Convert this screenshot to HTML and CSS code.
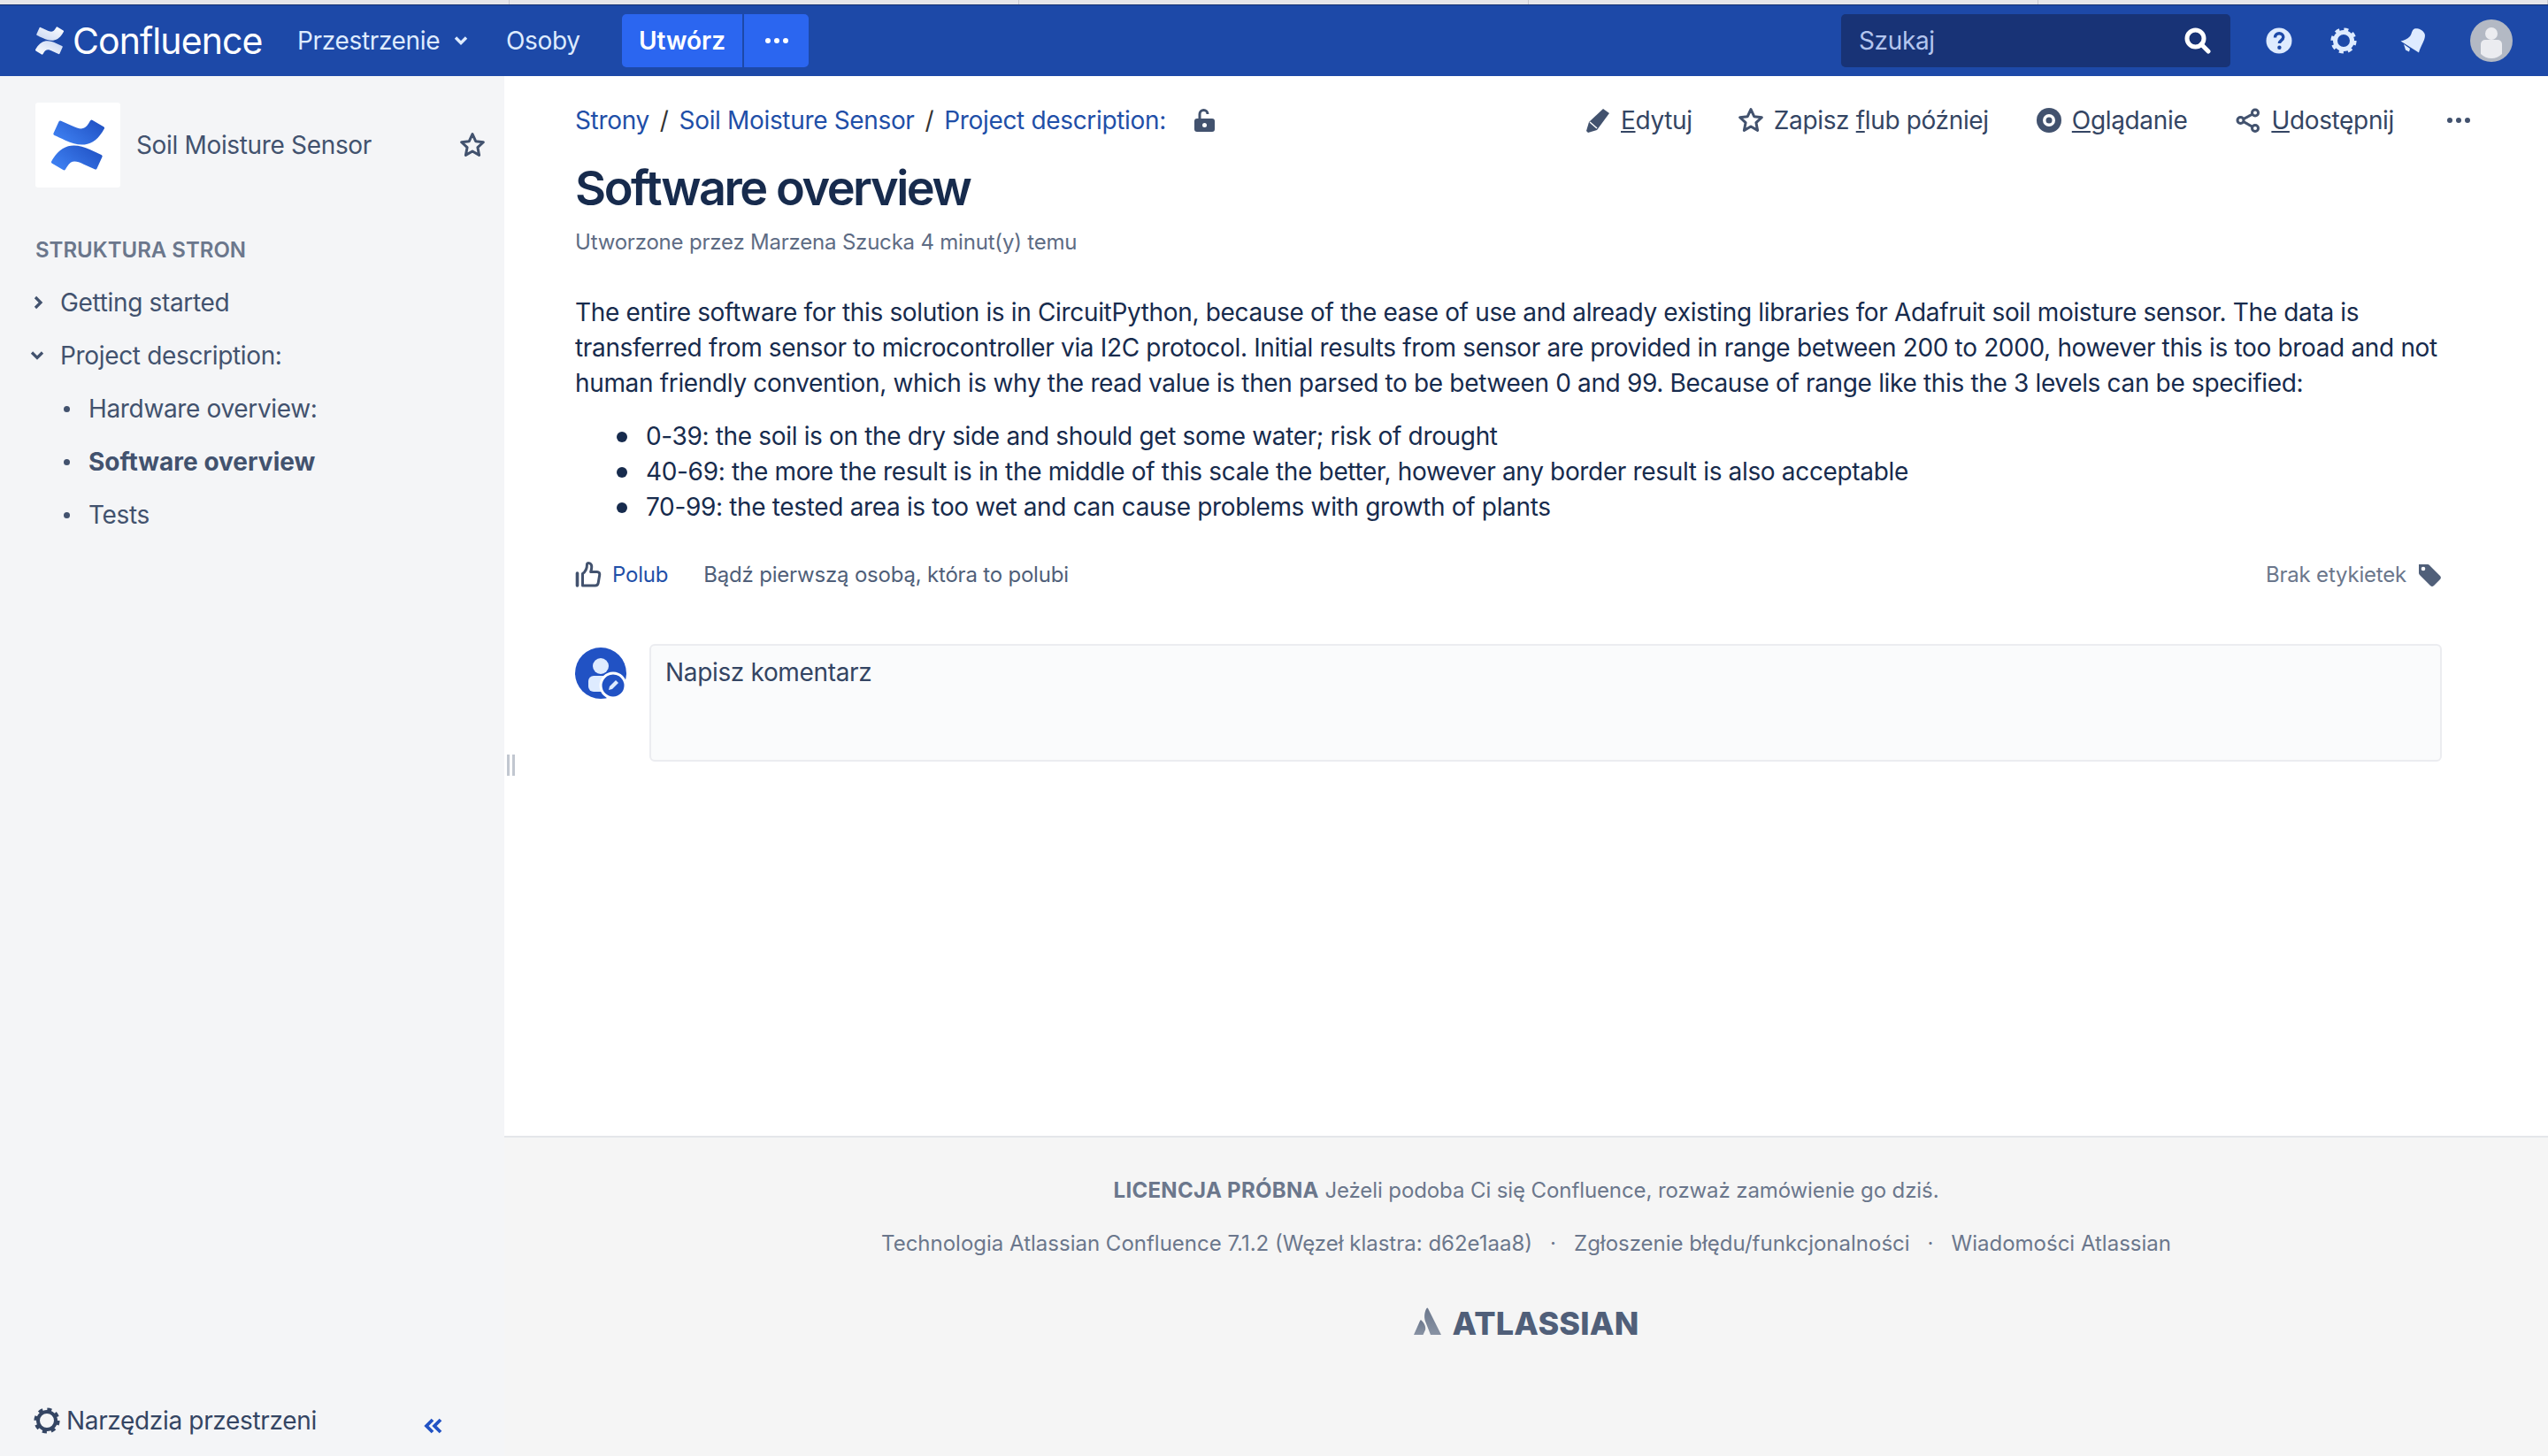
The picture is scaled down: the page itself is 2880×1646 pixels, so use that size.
FILE: index.html
```html
<!DOCTYPE html>
<html lang="pl">

<head>
  <meta charset="UTF-8">
  <title>Software overview - Soil Moisture Sensor</title>
  <link rel="stylesheet" href="styles.css">
</head>

<body>

  <div class="tabstrip"><span></span><span></span><span></span><span></span><span></span></div>

  <header class="topbar">
    <a class="brand">
      <svg class="brand-mark" viewBox="0 0 24 24"><path fill="url(#bw1)" d="M.87 18.257c-.248.382-.53.875-.763 1.245a.764.764 0 0 0 .255 1.04l4.965 3.054a.764.764 0 0 0 1.058-.26c.199-.332.454-.763.733-1.221 1.967-3.247 3.945-2.853 7.508-1.146l4.957 2.337a.764.764 0 0 0 1.028-.382l2.364-5.346a.764.764 0 0 0-.382-1 599.851 599.851 0 0 1-4.965-2.361C10.911 10.97 5.224 11.185.87 18.257z"/><path fill="url(#bw2)" d="M23.131 5.743c.248-.382.53-.875.763-1.245a.764.764 0 0 0-.255-1.04L18.674.404a.764.764 0 0 0-1.058.26c-.199.332-.454.763-.733 1.221-1.967 3.247-3.945 2.853-7.508 1.146L4.418.694a.764.764 0 0 0-1.028.382L1.026 6.422a.764.764 0 0 0 .382 1c1.05.5 3.145 1.494 4.965 2.361 6.716 3.247 12.403 3.032 16.758-4.04z"/>
        <defs>
          <linearGradient id="bw1" x1="1" y1="0" x2="0" y2="1"><stop offset="0" stop-color="#c5d4f2"/><stop offset="1" stop-color="#fff"/></linearGradient>
          <linearGradient id="bw2" x1="0" y1="1" x2="1" y2="0"><stop offset="0" stop-color="#c5d4f2"/><stop offset="1" stop-color="#fff"/></linearGradient>
        </defs>
      </svg>
      <span class="brand-name">Confluence</span>
    </a>
    <a class="nav-link nav-spaces">Przestrzenie
      <svg class="nav-chevron" viewBox="0 0 16 12"><path d="M2 2.5 8 8.5l6-6" fill="none" stroke="currentColor" stroke-width="3.4"/></svg>
    </a>
    <a class="nav-link nav-people">Osoby</a>
    <div class="create">
      <button class="create-main">Utwórz</button>
      <button class="create-more"><i></i><i></i><i></i></button>
    </div>
    <div class="topbar-right">
      <div class="search">
        <span>Szukaj</span>
        <svg class="search-icon" viewBox="0 0 30 30"><circle cx="12.5" cy="12.5" r="9.5" fill="none" stroke="#fff" stroke-width="5"/><path d="M19 19l8 8" stroke="#fff" stroke-width="5" stroke-linecap="round"/></svg>
      </div>
      <svg class="top-icon top-help" viewBox="0 0 30 30"><circle cx="15" cy="15" r="14.5" fill="#deebff"/><path d="M10.5 11.5c0-3 2-4.700 4.700-4.700s4.600 1.700 4.600 4.200c0 3.500-4.400 3.600-4.400 7" fill="none" stroke="#1d49a8" stroke-width="3.400"/><circle cx="15.400" cy="22.800" r="2.200" fill="#1d49a8"/></svg>
      <svg class="top-icon top-gear" viewBox="0 0 30 30"><circle cx="15" cy="15" r="9.500" fill="none" stroke="#deebff" stroke-width="5"/><circle cx="15" cy="15" r="12.800" fill="none" stroke="#deebff" stroke-width="3.600" stroke-dasharray="5 5.050"/></svg>
      <svg class="top-icon top-bell" viewBox="0 0 30 30"><path d="M17 1.500c3.500-1 9.500 1 11.500 5.500 1.300 3-.5 7.500-2 10.500-1.500 3-3.500 7-4.500 11L1.500 15.500c4-.8 8-2.800 10.500-5.500 2-2.300 2-7.200 5-8.500z" fill="#deebff"/><path d="M5 19l7 5-1 3.500-4-2z" fill="#deebff"/></svg>
      <svg class="top-avatar" viewBox="0 0 48 48"><circle cx="24" cy="24" r="24" fill="#b3b9c4"/><circle cx="24" cy="16" r="7" fill="#ebecf0"/><path d="M12 28a5 5 0 0 1 5-5h14a5 5 0 0 1 5 5v11a17 17 0 0 1-24 0z" fill="#ebecf0"/></svg>
    </div>
  </header>

  <div class="layout">
    <aside class="sidebar">
      <div class="space-head">
        <div class="space-tile">
          <svg class="space-logo" viewBox="0 0 24 24" preserveAspectRatio="none"><path fill="url(#cb1)" d="M.87 18.257c-.248.382-.53.875-.763 1.245a.764.764 0 0 0 .255 1.04l4.965 3.054a.764.764 0 0 0 1.058-.26c.199-.332.454-.763.733-1.221 1.967-3.247 3.945-2.853 7.508-1.146l4.957 2.337a.764.764 0 0 0 1.028-.382l2.364-5.346a.764.764 0 0 0-.382-1 599.851 599.851 0 0 1-4.965-2.361C10.911 10.97 5.224 11.185.87 18.257z"/><path fill="url(#cb2)" d="M23.131 5.743c.248-.382.53-.875.763-1.245a.764.764 0 0 0-.255-1.04L18.674.404a.764.764 0 0 0-1.058.26c-.199.332-.454.763-.733 1.221-1.967 3.247-3.945 2.853-7.508 1.146L4.418.694a.764.764 0 0 0-1.028.382L1.026 6.422a.764.764 0 0 0 .382 1c1.05.5 3.145 1.494 4.965 2.361 6.716 3.247 12.403 3.032 16.758-4.04z"/>
            <defs>
              <linearGradient id="cb1" x1="1" y1="0.2" x2="0" y2="0.8"><stop offset="0" stop-color="#2152c4"/><stop offset="1" stop-color="#3f82f4"/></linearGradient>
              <linearGradient id="cb2" x1="0" y1="0.8" x2="1" y2="0.2"><stop offset="0" stop-color="#3f82f4"/><stop offset="1" stop-color="#2152c4"/></linearGradient>
            </defs>
          </svg>
        </div>
        <span class="space-name">Soil Moisture Sensor</span>
        <svg class="space-star" viewBox="1.500 1.500 25 25"><path d="M14 3l3.300 7.200 7.700.9-5.700 5.300 1.500 7.800L14 20.300l-6.800 3.900 1.500-7.800L3 11.100l7.700-.9z" fill="none" stroke="#42526e" stroke-width="2.700" stroke-linejoin="round"/></svg>
      </div>

      <h3 class="tree-title">STRUKTURA STRON</h3>
      <ul class="tree">
        <li class="tree-item">
          <svg class="tree-arrow" viewBox="0 0 12 16"><path d="M3 2l6 6-6 6" fill="none" stroke="#42526e" stroke-width="3.200"/></svg>
          Getting started
        </li>
        <li class="tree-item">
          <svg class="tree-arrow tree-arrow-open" viewBox="0 0 16 12"><path d="M2 2.500l6 6 6-6" fill="none" stroke="#42526e" stroke-width="3.200"/></svg>
          Project description:
        </li>
        <li class="tree-item tree-child"><i></i>Hardware overview:</li>
        <li class="tree-item tree-child tree-current"><i></i>Software overview</li>
        <li class="tree-item tree-child"><i></i>Tests</li>
      </ul>

      <div class="side-tools">
        <svg class="tools-gear" viewBox="0 0 30 30"><circle cx="15" cy="15" r="10" fill="none" stroke="#344563" stroke-width="4"/><circle cx="15" cy="15" r="12.800" fill="none" stroke="#344563" stroke-width="3.600" stroke-dasharray="5 5.050"/></svg>
        <span class="tools-label">Narzędzia przestrzeni</span>
        <svg class="tools-collapse" viewBox="0 0 22 18"><path d="M10 2 3 9l7 7M19 2l-7 7 7 7" fill="none" stroke="#2152c4" stroke-width="3.800"/></svg>
      </div>
      <div class="side-handle"></div>
    </aside>

    <div class="page">
      <main class="content">
        <div class="page-top">
          <nav class="crumbs">
            <a>Strony</a><span>/</span><a>Soil Moisture Sensor</a><span>/</span><a>Project description:</a>
            <svg class="crumb-lock" viewBox="0 0 24 28"><path d="M7 13V7a4.500 4.500 0 0 1 9 0" fill="none" stroke="#42526e" stroke-width="3"/><rect x="1" y="12" width="23" height="15" rx="3" fill="#42526e"/><circle cx="12.500" cy="19.500" r="2.500" fill="#fff"/></svg>
          </nav>
          <div class="actions">
            <a class="action act-edit">
              <svg viewBox="0 0 28 28"><path d="M20 1l7 5-14 19-10 3-2-2 3-10z" fill="#42526e"/><path d="M5 16l8 7" stroke="#fff" stroke-width="1.500"/></svg>
              <span><u>E</u>dytuj</span>
            </a>
            <a class="action act-save">
              <svg viewBox="1.500 1.500 25 25"><path d="M14 3l3.300 7.200 7.700.9-5.700 5.300 1.500 7.800L14 20.300l-6.800 3.900 1.500-7.800L3 11.100l7.700-.9z" fill="none" stroke="#42526e" stroke-width="2.700" stroke-linejoin="round"/></svg>
              <span>Zapisz <u>f</u>lub później</span>
            </a>
            <a class="action act-watch">
              <svg viewBox="0 0 28 28"><circle cx="14" cy="14" r="14" fill="#42526e"/><circle cx="14" cy="14" r="7" fill="#fff"/><circle cx="14" cy="14" r="3.500" fill="#42526e"/></svg>
              <span><u>O</u>glądanie</span>
            </a>
            <a class="action act-share">
              <svg viewBox="0 0 28 28"><path d="M21 6 6 14l16 9" fill="none" stroke="#42526e" stroke-width="3"/><circle cx="22" cy="5.500" r="3.500" fill="#fff" stroke="#42526e" stroke-width="3"/><circle cx="5.500" cy="14" r="3.500" fill="#fff" stroke="#42526e" stroke-width="3"/><circle cx="22" cy="23" r="3.500" fill="#fff" stroke="#42526e" stroke-width="3"/></svg>
              <span><u>U</u>dostępnij</span>
            </a>
            <a class="action act-more"><i></i><i></i><i></i></a>
          </div>
        </div>

        <h1 class="title">Software overview</h1>
        <p class="meta">Utworzone przez Marzena Szucka 4 minut(y) temu</p>

        <div class="wiki">
          <p>The entire software for this solution is in CircuitPython, because of the ease of use and already existing libraries for Adafruit soil moisture sensor. The data is transferred from sensor to microcontroller via I2C protocol. Initial results from sensor are provided in range between 200 to 2000, however this is too broad and not human friendly convention, which is why the read value is then parsed to be between 0 and 99. Because of range like this the 3 levels can be specified:</p>
          <ul>
            <li>0-39: the soil is on the dry side and should get some water; risk of drought</li>
            <li>40-69: the more the result is in the middle of this scale the better, however any border result is also acceptable</li>
            <li>70-99: the tested area is too wet and can cause problems with growth of plants</li>
          </ul>
        </div>

        <div class="like-row">
          <svg class="like-icon" viewBox="0 0 30 30"><path d="M8.500 13.500c3-2 5-5.500 5-10.500 0-2 4-2 5 1 .7 2.500 0 5-.8 7.500H25c2 0 3 1.500 2.700 3.500l-1.500 9c-.3 2-1.700 3-3.500 3H8.500z" fill="none" stroke="#42526e" stroke-width="3" stroke-linejoin="round"/><path d="M2.500 13v14" stroke="#42526e" stroke-width="3.600" stroke-linecap="round"/></svg>
          <a class="like-link">Polub</a>
          <span class="like-text">Bądź pierwszą osobą, która to polubi</span>
          <span class="labels">Brak etykietek
            <svg class="label-icon" viewBox="0 0 28 26"><path d="M2 1h10a3 3 0 0 1 2 1l12 12a3 3 0 0 1 0 4l-7 7a3 3 0 0 1-4 0L3 13a3 3 0 0 1-1-2z" fill="#505f79"/><circle cx="7" cy="6" r="2.300" fill="#fff"/></svg>
          </span>
        </div>

        <div class="comment-row">
          <svg class="comment-avatar" viewBox="0 0 58 58"><circle cx="29" cy="29" r="29" fill="#2152c4"/><circle cx="29" cy="21" r="9" fill="#deebff"/><path d="M15 38a6 6 0 0 1 6-6h16a6 6 0 0 1 6 6v12H21a6 6 0 0 1-6-6z" fill="#deebff"/><circle cx="43" cy="43" r="14" fill="#2152c4" stroke="#fff" stroke-width="3"/><path d="M38 48l1-4 7-7 3 3-7 7z" fill="#deebff"/></svg>
          <div class="comment-box">Napisz komentarz</div>
        </div>
      </main>

      <footer class="footer">
        <p class="footer-line footer-trial"><b>LICENCJA PRÓBNA</b> Jeżeli podoba Ci się Confluence, rozważ zamówienie go dziś.</p>
        <p class="footer-line footer-links">
          <span>Technologia Atlassian Confluence 7.1.2 (Węzeł klastra: d62e1aa8)</span><em>·</em><span>Zgłoszenie błędu/funkcjonalności</span><em>·</em><span>Wiadomości Atlassian</span>
        </p>
        <div class="atlassian">
          <svg class="atlassian-mark" viewBox="0 0 31 31"><defs><linearGradient id="am" x1="0" y1="0" x2="0" y2="1"><stop offset="0" stop-color="#6b778c"/><stop offset="1" stop-color="#8993a4"/></linearGradient></defs><path d="M8.500 14.500c-.4-.5-1-.4-1.300.2L0 31h10.500l2.500-5.500c.9-2-.3-7.400-4.500-11z" fill="url(#am)"/><path d="M14.500 1c-2.800 4.800-3.200 11.300-.9 16.300L19 31h12L16 1c-.4-.7-1.100-.7-1.500 0z" fill="url(#am)"/></svg>
          <span>ATLASSIAN</span>
        </div>
      </footer>
    </div>
  </div>

</body>
</html>
```
FILE: styles.css
```css
* {
  box-sizing: border-box;
}

html,
body {
  margin: 0;
  padding: 0;
  height: 1646px;
  overflow: hidden;
}

body {
  font-family: 'Inter', 'Liberation Sans', sans-serif;
  font-size: 28px;
  line-height: 40px;
  letter-spacing: -0.34px;
  color: #172b4d;
  background-color: #fff;
  display: flex;
  flex-direction: column;
}

a {
  color: inherit;
}

/* browser tabs peeking in at the very top */
.tabstrip {
  height: 6px;
  display: grid;
  grid-template-columns: repeat(5, 576px);
  background-color: #e6e6ea;
  border-bottom: 1px solid #14306f;
}

.tabstrip span {
  border-right: 1px solid #c9c9cf;
}

.topbar {
  height: 80px;
  flex: none;
  display: flex;
  align-items: center;
  padding-left: 40px;
  background-color: #1d49a8;
  color: #deebff;
}

.brand {
  display: flex;
  align-items: center;
  color: #fff;
  width: 296px;
}

.brand-mark {
  width: 32px;
  height: 32px;
  margin-right: 10px;
}

.brand-name {
  font-size: 41px;
  letter-spacing: -0.9px;
}

.nav-link {
  display: flex;
  align-items: center;
}

.nav-spaces {
  width: 236px;
}

.nav-chevron {
  width: 16px;
  height: 12px;
  margin-left: 16px;
}

.nav-people {
  width: 131px;
}

.create {
  display: flex;
  height: 60px;
  width: 211px;
  border-radius: 5px;
  overflow: hidden;
}

.create button {
  border: none;
  background-color: #2b66f0;
  color: #fff;
  font: inherit;
  padding: 0;
}

.create-main {
  width: 138px;
  font-weight: 600 !important;
  border-right: 2px solid #1d49a8 !important;
}

.create-more {
  flex: 1;
  display: flex;
  align-items: center;
  justify-content: center;
  gap: 4px;
}

.create-more i,
.act-more i {
  width: 6px;
  height: 6px;
  border-radius: 50%;
  background-color: #fff;
}

.topbar-right {
  margin-left: auto;
  display: flex;
  align-items: center;
  padding-right: 40px;
}

.search {
  width: 440px;
  height: 60px;
  border-radius: 5px;
  background-color: #183376;
  color: #b3c5ee;
  display: flex;
  align-items: center;
  justify-content: space-between;
  padding: 0 22px 0 20px;
}

.search-icon {
  width: 30px;
  height: 30px;
}

.top-icon {
  width: 30px;
  height: 30px;
}

.top-help {
  margin-left: 40px;
}

.top-gear {
  margin-left: 43px;
}

.top-bell {
  margin-left: 48px;
}

.top-avatar {
  width: 48px;
  height: 48px;
  margin-left: 50px;
}

.layout {
  flex: 1;
  display: flex;
  min-height: 0;
}

.sidebar {
  position: relative;
  width: 570px;
  flex: none;
  background-color: #f4f5f7;
  color: #42526e;
  display: flex;
  flex-direction: column;
  padding: 30px 0 0 40px;
}

.space-head {
  display: flex;
  align-items: center;
  height: 96px;
}

.space-tile {
  width: 96px;
  height: 96px;
  border-radius: 3px;
  background-color: #fff;
  display: flex;
  align-items: center;
  justify-content: center;
}

.space-logo {
  width: 60px;
  height: 58px;
}

.space-name {
  margin-left: 18px;
  width: 366px;
}

.space-star {
  width: 28px;
  height: 28px;
}

.tree-title {
  margin: 56px 0 0;
  font-size: 24px;
  line-height: 30px;
  font-weight: 600;
  letter-spacing: 0;
  color: #6b778c;
}

.tree {
  list-style-type: none;
  margin: 14px 0 0;
  padding: 0;
}

.tree-item {
  position: relative;
  height: 60px;
  padding-left: 28px;
  display: flex;
  align-items: center;
}

.tree-arrow {
  position: absolute;
  left: -3px;
  top: 22px;
  width: 12px;
  height: 16px;
}

.tree-arrow-open {
  left: -6px;
  top: 24px;
  width: 16px;
  height: 12px;
}

.tree-child {
  padding-left: 60px;
}

.tree-child i {
  position: absolute;
  left: 32px;
  top: 27px;
  width: 7px;
  height: 7px;
  border-radius: 50%;
  background-color: #42526e;
}

.tree-current {
  font-weight: 700;
  letter-spacing: 0;
}

.side-tools {
  margin-top: auto;
  height: 70px;
  display: flex;
  align-items: center;
  color: #344563;
  margin-left: -2px;
  padding-bottom: 10px;
}

.tools-gear {
  width: 30px;
  height: 30px;
}

.tools-label {
  margin-left: 7px;
  width: 404px;
}

.tools-collapse {
  width: 22px;
  height: 18px;
  margin-top: 12px;
}

/* drag handle on the sidebar edge */
.side-handle {
  position: absolute;
  left: 573px;
  top: 767px;
  width: 9px;
  height: 24px;
  border-left: 3px solid #c1c7d0;
  border-right: 3px solid #c1c7d0;
}

.page {
  flex: 1;
  display: flex;
  flex-direction: column;
  min-width: 0;
}

.content {
  flex: 1;
  padding: 30px 120px 0 80px;
}

.page-top {
  display: flex;
  align-items: center;
  height: 40px;
}

.crumbs {
  display: flex;
  align-items: center;
  color: #1f4fa8;
}

.crumbs span {
  color: #333;
  margin: 0 12px;
}

.crumb-lock {
  width: 24px;
  height: 28px;
  margin-left: 31px;
}

.actions {
  margin-left: auto;
  display: flex;
  align-items: center;
  color: #344563;
  margin-right: -32px;
}

.action {
  display: flex;
  align-items: center;
  gap: 12px;
}

.action svg {
  width: 28px;
  height: 28px;
}

.act-save {
  margin-left: 52px;
}

.act-watch {
  margin-left: 54px;
}

.act-share {
  margin-left: 55px;
}

.act-more {
  margin-left: 60px;
  gap: 4px;
}

.act-more i {
  background-color: #42526e;
}

.title {
  margin: 25px 0 0;
  font-size: 54px;
  line-height: 64px;
  font-weight: 600;
  letter-spacing: -2.45px;
  color: #172b4d;
}

.meta {
  margin: 13px 0 0;
  font-size: 24px;
  line-height: 32px;
  letter-spacing: -0.2px;
  color: #5e6c84;
}

.wiki {
  margin-top: 43px;
}

.wiki p {
  margin: 0;
}

.wiki ul {
  list-style-type: none;
  margin: 20px 0 0;
  padding-left: 80px;
}

.wiki li::before {
  content: "";
  display: inline-block;
  width: 12px;
  height: 12px;
  border-radius: 50%;
  background-color: #172b4d;
  margin: 0 21px 3px -33px;
}

.like-row {
  display: flex;
  align-items: center;
  margin-top: 37px;
  height: 40px;
  font-size: 24px;
  letter-spacing: -0.2px;
  color: #505f79;
}

.like-icon {
  width: 30px;
  height: 30px;
}

.like-link {
  margin-left: 12px;
  color: #1f4fa8;
}

.like-text {
  margin-left: 40px;
}

.labels {
  margin-left: auto;
  display: flex;
  align-items: center;
  color: #6b778c;
}

.label-icon {
  width: 28px;
  height: 26px;
  margin-left: 12px;
}

.comment-row {
  display: flex;
  align-items: flex-start;
  margin-top: 58px;
}

.comment-avatar {
  width: 58px;
  height: 58px;
  margin-top: 4px;
}

.comment-box {
  margin-left: 26px;
  flex: 1;
  height: 133px;
  padding: 10px 16px;
  border: 2px solid #ebecf0;
  border-radius: 6px;
  background-color: #fafbfc;
  color: #344563;
}

.footer {
  height: 362px;
  flex: none;
  background-color: #f5f5f5;
  border-top: 2px solid #e4e6ea;
  text-align: center;
  font-size: 24px;
  letter-spacing: 0;
  color: #6b778c;
  padding-top: 40px;
}

.footer-line {
  margin: 0 0 20px;
}

.footer-trial {
  letter-spacing: -0.1px;
}

.footer-line b {
  font-weight: 700;
  letter-spacing: 0.3px;
}

.footer-links em {
  font-style: normal;
  margin: 0 20px;
}

.atlassian {
  margin-top: 50px;
  display: flex;
  align-items: center;
  justify-content: center;
  gap: 13px;
  font-size: 36px;
  font-weight: 800;
  letter-spacing: 0.2px;
  color: #505f79;
}

.atlassian-mark {
  width: 31px;
  height: 31px;
  margin-top: -6px;
}
```
